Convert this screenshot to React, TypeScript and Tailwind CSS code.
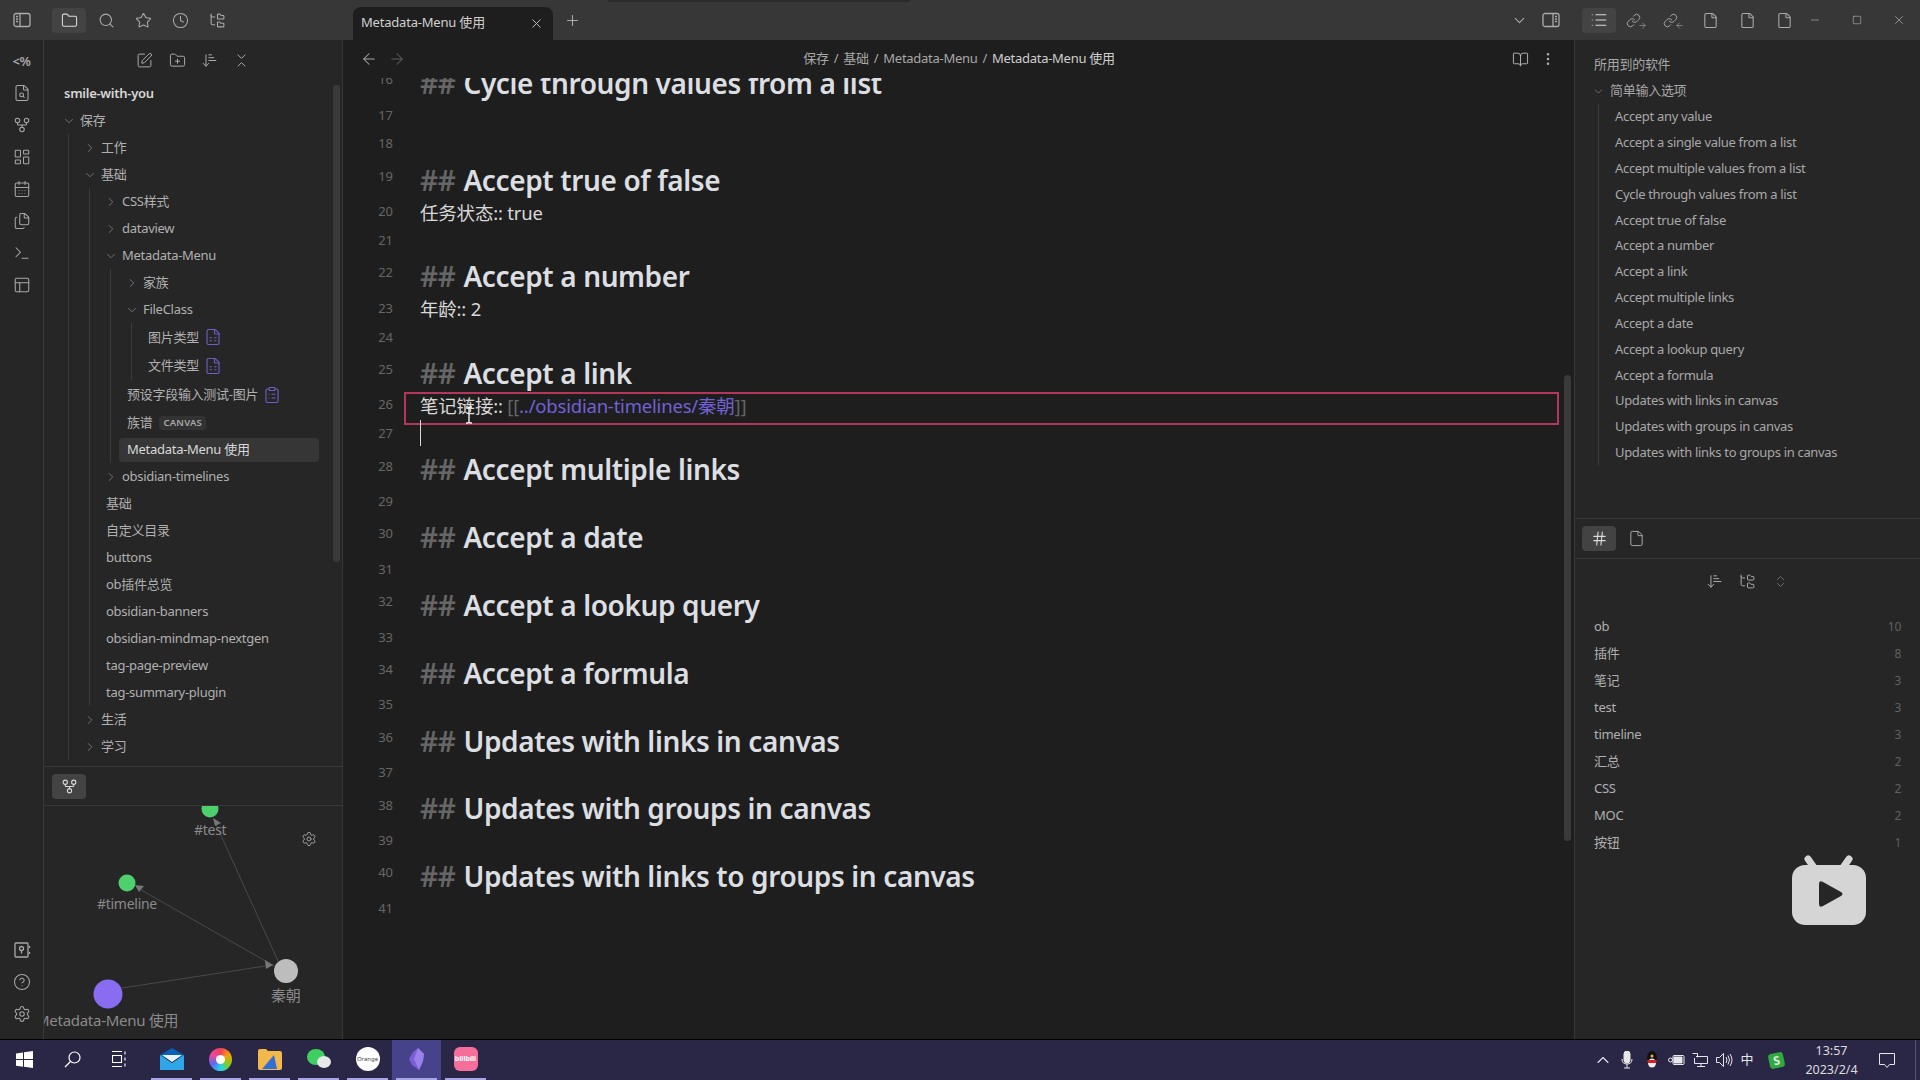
import { ReactNode } from "react";
import {
  ArrowDownNarrowWide, ArrowLeft, ArrowRight, BookOpen, CalendarDays, ChevronDown, ChevronRight, ChevronUp,
  ChevronsDownUp, ChevronsUpDown, CircleHelp, ClipboardList, Clock, EllipsisVertical, File, FileSearch,
  FileSpreadsheet, Files, Folder, FolderPlus, FolderTree, GitFork, Hash, LayoutDashboard, Link, List, Minus,
  PanelsTopLeft, Plus, Search, Settings, Square, SquarePen, Star, Terminal, X,
} from "lucide-react";

const UI_FONT = "font-['Noto_Sans','Noto_Sans_CJK_SC',sans-serif]";

function SideIcon({ right = false }: { right?: boolean }) {
  return (
    <svg width="18" height="18" viewBox="0 0 18 18" fill="none" stroke="currentColor" strokeWidth="1.3">
      <rect x="1" y="2.5" width="16" height="13" rx="2" />
      <path d={right ? "M11 2.5v13" : "M7 2.5v13"} />
      <path d={right ? "M13 5.5h2M13 8h2M13 10.5h2" : "M3 5.5h2M3 8h2M3 10.5h2"} />
    </svg>
  );
}

function Btn({ children, active = false, w = "w-[34px]" }: { children: ReactNode; active?: boolean; w?: string }) {
  return (
    <div className={`${w} h-[25px] shrink-0 flex items-center justify-center rounded text-[#ababab] ${active ? "bg-[#434343] text-[#dadada]" : ""}`}>
      {children}
    </div>
  );
}

function TitleBar() {
  return (
    <div className="h-10 shrink-0 bg-[#373737] flex items-end relative">
      <div className="absolute top-0 left-[608px] w-[302px] h-[2px] bg-[#2b2b2b]" />
      <div className="h-10 flex items-center pl-[5px] gap-[3px]">
        <Btn><SideIcon /></Btn>
        <div className="w-[7px]" />
        <Btn active><Folder size={17} strokeWidth={1.5} /></Btn>
        <Btn><Search size={17} strokeWidth={1.5} /></Btn>
        <Btn><Star size={17} strokeWidth={1.5} /></Btn>
        <Btn><Clock size={17} strokeWidth={1.5} /></Btn>
        <Btn><FolderTree size={17} strokeWidth={1.5} /></Btn>
      </div>
      <div className="ml-[119px] w-[200px] h-[33px] bg-[#1e1e1e] rounded-t-lg flex items-center pl-[8px] pr-[9px] text-[#d0d0d0] text-[13px] tracking-[-0.2px]">
        <span className="flex-1 -mt-[2px]">Metadata-Menu 使用</span>
        <X size={15} strokeWidth={1.5} className="text-[#c0c0c0]" />
      </div>
      <div className="h-10 flex items-center ml-[2px]"><Btn><Plus size={17} strokeWidth={1.5} /></Btn></div>
      <div className="flex-1" />
      <div className="h-10 flex items-center">
        <Btn w="w-[32px]"><ChevronDown size={17} strokeWidth={1.5} /></Btn>
        <Btn w="w-[32px]"><SideIcon right /></Btn>
        <div className="w-[15px]" />
        <div className="flex gap-[3px]">
          <Btn active><List size={18} strokeWidth={1.5} /></Btn>
          <Btn><span className="flex items-end"><Link size={15} strokeWidth={1.5} /><ArrowRight size={9} strokeWidth={1.6} className="-ml-[3px] -mb-[2px]" /></span></Btn>
          <Btn><span className="flex items-end"><Link size={15} strokeWidth={1.5} /><ArrowLeft size={9} strokeWidth={1.6} className="-ml-[3px] -mb-[2px]" /></span></Btn>
          <Btn><File size={17} strokeWidth={1.5} /></Btn>
          <Btn><File size={17} strokeWidth={1.5} /></Btn>
          <Btn><File size={17} strokeWidth={1.5} /></Btn>
        </div>
        <div className="w-[28px] mr-[7px] flex justify-center text-[#bdbdbd]"><Minus size={12} strokeWidth={1.2} /></div>
        <div className="w-[42px] flex justify-center text-[#bdbdbd]"><Square size={10} strokeWidth={1.4} /></div>
        <div className="w-[42px] flex justify-center text-[#bdbdbd]"><X size={14} strokeWidth={1.1} /></div>
      </div>
    </div>
  );
}

function Ribbon() {
  const top = [FileSearch, GitFork, LayoutDashboard, CalendarDays, Files, Terminal, PanelsTopLeft];
  return (
    <div className="w-[44px] shrink-0 bg-[#262626] border-r border-[#383838] flex flex-col items-center text-[#a8a8a8] pt-[7px]">
      <div className="h-[30px] flex items-center text-[13px] font-semibold tracking-tight">&lt;%</div>
      {top.map((Icon, i) => (
        <div key={i} className="h-[32px] w-full flex items-center justify-center">
          <Icon size={18} strokeWidth={1.4} />
        </div>
      ))}
      <div className="flex-1" />
      <div className="h-[32px] flex items-center">
        <svg width="18" height="18" viewBox="0 0 18 18" fill="none" stroke="currentColor" strokeWidth="1.3">
          <rect x="2" y="2" width="13" height="14" rx="1" />
          <circle cx="8.5" cy="7.5" r="2" />
          <path d="M8.5 9.5v3M16.5 5v2M16.5 11v2" />
        </svg>
      </div>
      <div className="h-[32px] flex items-center"><CircleHelp size={18} strokeWidth={1.4} /></div>
      <div className="h-[32px] flex items-center mb-[9px]"><Settings size={18} strokeWidth={1.4} /></div>
    </div>
  );
}

function Leaf({ text, h = "h-[27px]", children, active = false }: { text: string; h?: string; children?: ReactNode; active?: boolean }) {
  return (
    <div className={`${h} flex items-center pl-[9px] text-[13px] text-[#b0b0b0]`}>
      <div className={`flex items-center gap-[5px] pl-[8px] ${active ? "w-[200px] h-[24px] bg-[#363636] rounded text-[#d8d8d8]" : ""}`}>
        <span className="whitespace-nowrap">{text}</span>
        {children}
      </div>
    </div>
  );
}

function Folder2({ text, open = false, children }: { text: string; open?: boolean; children?: ReactNode }) {
  return (
    <div>
      <div className="h-[27px] flex items-center text-[13px] text-[#b0b0b0]">
        <span className="w-[33px] pl-[15px] text-[#777] flex">
          {open ? <ChevronDown size={14} strokeWidth={1.6} /> : <ChevronRight size={14} strokeWidth={1.6} />}
        </span>
        <span className="whitespace-nowrap">{text}</span>
      </div>
      {children && <div className="ml-[21px] -mr-px border-l border-[#3c3c3c] [&>*]:-ml-px">{children}</div>}
    </div>
  );
}

function LeftSidebar() {
  return (
    <div className="w-[299px] shrink-0 bg-[#262626] border-r border-[#383838] flex flex-col tracking-[-0.28px]">
      <div className="h-[727px] border-b border-[#383838] relative overflow-hidden shrink-0 flex flex-col">
        <div className="h-[40px] flex items-center pl-[84px] text-[#a8a8a8] shrink-0">
          <Btn w="w-[33px]"><SquarePen size={17} strokeWidth={1.4} /></Btn>
          <Btn w="w-[32px]"><FolderPlus size={17} strokeWidth={1.4} /></Btn>
          <Btn w="w-[32px]"><ArrowDownNarrowWide size={17} strokeWidth={1.4} /></Btn>
          <Btn w="w-[33px]"><ChevronsDownUp size={17} strokeWidth={1.4} /></Btn>
        </div>
        <div className="absolute right-[2px] top-[45px] w-[7px] h-[477px] bg-[#3a3a3a] rounded" />
        <div className="h-[27px] pl-[20px] flex items-center text-[13px] font-semibold text-[#d6d6d6] shrink-0">smile-with-you</div>
        <div className="ml-[3px]">
          <Folder2 text="保存" open>
            <Folder2 text="工作" />
            <Folder2 text="基础" open>
              <Folder2 text="CSS样式" />
              <Folder2 text="dataview" />
              <Folder2 text="Metadata-Menu" open>
                <Folder2 text="家族" />
                <Folder2 text="FileClass" open>
                  <Leaf text="图片类型" h="h-[28.5px]"><FileSpreadsheet size={18} strokeWidth={1.5} className="text-[#6f5fc4]" /></Leaf>
                  <Leaf text="文件类型" h="h-[28.5px]"><FileSpreadsheet size={18} strokeWidth={1.5} className="text-[#6f5fc4]" /></Leaf>
                </Folder2>
                <Leaf text="预设字段输入测试-图片" h="h-[29px]"><ClipboardList size={18} strokeWidth={1.5} className="text-[#6f5fc4]" /></Leaf>
                <Leaf text="族谱" h="h-[28px]">
                  <span className="ml-[2px] h-[14px] px-[4px] bg-[#333] rounded text-[9.5px] font-semibold tracking-wide text-[#a8a8a8] flex items-center">CANVAS</span>
                </Leaf>
                <Leaf text="Metadata-Menu 使用" h="h-[26px]" active />
              </Folder2>
              <Folder2 text="obsidian-timelines" />
              <Leaf text="基础" />
              <Leaf text="自定义目录" />
              <Leaf text="buttons" />
              <Leaf text="ob插件总览" />
              <Leaf text="obsidian-banners" />
              <Leaf text="obsidian-mindmap-nextgen" />
              <Leaf text="tag-page-preview" />
              <Leaf text="tag-summary-plugin" />
            </Folder2>
            <Folder2 text="生活" />
            <Folder2 text="学习" />
          </Folder2>
        </div>
      </div>
      <div className="h-[39px] shrink-0 border-b border-[#383838] flex items-center pl-[8px]">
        <Btn active><GitFork size={17} strokeWidth={1.5} /></Btn>
      </div>
      <GraphView />
    </div>
  );
}

// nodes of the local graph, coordinates relative to the panel
function GraphView() {
  return (
    <div className="flex-1 relative overflow-hidden text-[#8a8a8a] text-[14px]">
      <svg className="absolute inset-0" width="298" height="233" fill="none">
        <path d="M234 155 L170 14 M232 161 L92 81 M78 182 L228 159" stroke="#4a4a4a" strokeWidth="1" />
        <path d="M169 12l8 5-6 3zM91 79l9 1-5 6zM229 159l-8-5 1 9z" fill="#777" />
        <circle cx="166" cy="3" r="8.5" fill="#4ed06f" />
        <circle cx="83" cy="77" r="8.5" fill="#4ed06f" />
        <circle cx="242" cy="165" r="12" fill="#bdbdbd" />
        <circle cx="64" cy="188" r="14.5" fill="#8a6cf0" />
      </svg>
      <span className="absolute left-[150px] top-[13px]">#test</span>
      <span className="absolute left-[53px] top-[87px]">#timeline</span>
      <span className="absolute left-[227px] top-[178px] text-[15px]">秦朝</span>
      <span className="absolute -left-[8px] top-[203px] whitespace-nowrap text-[15px]">Metadata-Menu 使用</span>
      <Settings size={16} strokeWidth={1.4} className="absolute left-[257px] top-[25px] text-[#a8a8a8]" />
    </div>
  );
}

type Line = { n: number; h?: string; t?: string };

const LINES: Line[] = [
  { n: 16, h: "Cycle through values from a list" },
  { n: 17 },
  { n: 18 },
  { n: 19, h: "Accept true of false" },
  { n: 20, t: "任务状态:: true" },
  { n: 21 },
  { n: 22, h: "Accept a number" },
  { n: 23, t: "年龄:: 2" },
  { n: 24 },
  { n: 25, h: "Accept a link" },
  { n: 26, t: "link" },
  { n: 27 },
  { n: 28, h: "Accept multiple links" },
  { n: 29 },
  { n: 30, h: "Accept a date" },
  { n: 31 },
  { n: 32, h: "Accept a lookup query" },
  { n: 33 },
  { n: 34, h: "Accept a formula" },
  { n: 35 },
  { n: 36, h: "Updates with links in canvas" },
  { n: 37 },
  { n: 38, h: "Updates with groups in canvas" },
  { n: 39 },
  { n: 40, h: "Updates with links to groups in canvas" },
  { n: 41 },
];

function EditorLine({ line }: { line: Line }) {
  const num = (
    <div className="w-[77px] pr-[27px] shrink-0 text-right text-[13px] text-[#666]">{line.n}</div>
  );
  if (line.h) {
    return (
      <div className="h-[39px] flex">
        <div className="h-[36px] flex items-center">{num}</div>
        <div className="flex items-center h-[42px] whitespace-nowrap text-[28px] font-semibold tracking-[-0.38px] text-[#dcdee2]">
          <span className="text-[#666] mr-[8px]">##</span>
          <span>{line.h}</span>
        </div>
      </div>
    );
  }
  return (
    <div className="h-[28.8px] flex items-center">
      {num}
      {line.t === "link" ? (
        <div className="text-[18.5px] tracking-[-0.2px] whitespace-nowrap pt-[1px]">
          <span className="text-[#d8d8d8]">笔记链接:: </span>
          <span className="text-[#666]">[[</span>
          <span className="text-[#7161d6]">../obsidian-timelines/秦朝</span>
          <span className="text-[#666]">]]</span>
        </div>
      ) : (
        <div className="text-[18.5px] tracking-[-0.2px] text-[#d8d8d8] whitespace-nowrap pt-[1px]">{line.t}</div>
      )}
    </div>
  );
}

function Editor() {
  return (
    <div className="flex-1 min-w-0 bg-[#1e1e1e] flex flex-col relative">
      <div className="h-[38px] shrink-0 flex items-center relative text-[#a8a8a8] z-10 bg-[#1e1e1e]">
        <div className="pl-[17px] flex gap-[10px]">
          <ArrowLeft size={18} strokeWidth={1.4} />
          <ArrowRight size={18} strokeWidth={1.4} className="text-[#5f5f5f]" />
        </div>
        <div className="flex-1 flex justify-center gap-[5px] text-[13px] tracking-[-0.28px] -mt-[1px]">
          <span>保存</span><span>/</span><span>基础</span><span>/</span><span>Metadata-Menu</span><span>/</span>
          <span className="text-[#cfcfcf]">Metadata-Menu 使用</span>
        </div>
        <div className="pr-[18px] flex items-center gap-[11px] text-[#b0b0b0]">
          <BookOpen size={17} strokeWidth={1.4} />
          <EllipsisVertical size={16} strokeWidth={1.8} />
        </div>
      </div>
      <div className="flex-1 overflow-hidden">
        <div className="-mt-[16px]">
          {LINES.map((l) => <EditorLine key={l.n} line={l} />)}
        </div>
      </div>
      <div className="absolute left-[61px] top-[352px] w-[1155px] h-[33px] border-2 border-[#b4365a]" />
      <div className="absolute left-[77px] top-[380px] w-px h-[26px] bg-[#d8d8d8]" />
      <svg className="absolute left-[121px] top-[366px]" width="10" height="18" viewBox="0 0 10 18" fill="none" stroke="#f0f0f0" strokeWidth="1.4">
        <path d="M2 1h2l1 1 1-1h2M5 2v14M2 17h2l1-1 1 1h2" />
      </svg>
      <div className="absolute right-[3px] top-[335px] w-[7px] h-[466px] bg-[#3a3a3a] rounded" />
    </div>
  );
}

const OUTLINE = [
  "Accept any value", "Accept a single value from a list", "Accept multiple values from a list",
  "Cycle through values from a list", "Accept true of false", "Accept a number", "Accept a link",
  "Accept multiple links", "Accept a date", "Accept a lookup query", "Accept a formula",
  "Updates with links in canvas", "Updates with groups in canvas", "Updates with links to groups in canvas",
];

const TAGS: [string, number][] = [
  ["ob", 10], ["插件", 8], ["笔记", 3], ["test", 3], ["timeline", 3], ["汇总", 2], ["CSS", 2], ["MOC", 2], ["按钮", 1],
];

function RightSidebar() {
  return (
    <div className="w-[346px] shrink-0 bg-[#262626] border-l border-[#383838] flex flex-col relative tracking-[-0.28px]">
      <div className="h-[479px] shrink-0 border-b border-[#383838] pt-[12px] text-[13px] text-[#a8a8a8]">
        <div className="h-[26px] pl-[19px] flex items-center">所用到的软件</div>
        <div className="h-[26px] pl-[17px] flex items-center gap-[5px]">
          <ChevronDown size={13} strokeWidth={1.6} className="text-[#777]" />
          <span>简单输入选项</span>
        </div>
        <div className="ml-[23px] border-l border-[#3c3c3c] tracking-[-0.32px]">
          {OUTLINE.map((o) => (
            <div key={o} className="h-[25.85px] pl-[16px] flex items-center whitespace-nowrap">{o}</div>
          ))}
        </div>
      </div>
      <div className="h-[40px] shrink-0 border-b border-[#383838] flex items-center pl-[7px] gap-[3px]">
        <Btn active><Hash size={17} strokeWidth={1.6} /></Btn>
        <Btn><File size={17} strokeWidth={1.4} /></Btn>
      </div>
      <div className="h-[42px] flex items-center justify-center gap-[5px] pt-[2px] text-[#a8a8a8]">
        <Btn w="w-[28px]"><ArrowDownNarrowWide size={17} strokeWidth={1.4} /></Btn>
        <Btn w="w-[28px]"><FolderTree size={17} strokeWidth={1.4} /></Btn>
        <Btn w="w-[28px]"><ChevronsUpDown size={15} strokeWidth={1.4} className="text-[#777]" /></Btn>
      </div>
      <div className="pt-[12px] pl-[19px] pr-[19px] text-[13px]">
        {TAGS.map(([t, c]) => (
          <div key={t} className="h-[27px] flex items-center justify-between">
            <span className="text-[#b0b0b0]">{t}</span>
            <span className="text-[#616161] text-[12px]">{c}</span>
          </div>
        ))}
      </div>
      <svg className="absolute left-[216px] top-[814px]" width="76" height="72" viewBox="0 0 76 72">
        <path d="M24 15 L17 5 M51 15 L58 5" stroke="#d5d5d5" strokeWidth="7" strokeLinecap="round" />
        <rect x="1" y="11" width="74" height="60" rx="13" fill="#d5d5d5" />
        <path d="M28 30q0-4 4-2l18 10q3 2 0 4l-18 10q-4 2-4-2z" fill="#262626" />
      </svg>
    </div>
  );
}

function TaskIcon({ children, run = false, active = false, w = "w-[49px]" }: { children: ReactNode; run?: boolean; active?: boolean; w?: string }) {
  return (
    <div className={`${w} h-full flex flex-col shrink-0 ${active ? "bg-[#47438a]" : ""}`}>
      <div className="flex-1 flex items-center justify-center">{children}</div>
      <div className={`h-[2px] mx-[4px] ${run ? "bg-[#a9a4e6]" : ""}`} />
    </div>
  );
}

function Taskbar() {
  return (
    <div className="h-[41px] shrink-0 bg-[#2a2746] border-t border-black flex items-stretch text-white">
      <TaskIcon w="w-[48px]">
        <svg width="17" height="17" viewBox="0 0 17 17" fill="#fff"><path d="M0 2.4l7-1v6.7H0zM8 1.3L17 0v8.100H8zM0 9h7v6.700l-7-1zM8 9h9v8l-9-1.300z" /></svg>
      </TaskIcon>
      <TaskIcon w="w-[48px]">
        <svg width="17" height="17" viewBox="0 0 17 17" fill="none" stroke="#fff" strokeWidth="1.2"><circle cx="10.500" cy="6.500" r="5.500" /><path d="M6.500 10.500L1 16" /></svg>
      </TaskIcon>
      <TaskIcon w="w-[48px]">
        <svg width="16" height="16" viewBox="0 0 16 16" fill="none" stroke="#fff" strokeWidth="1.1"><path d="M0 .5h10M0 15.500h10M.5 4.500h9v7h-9zM13 .5v3M13 6.500v3M13 12.500v3" /></svg>
      </TaskIcon>
      <div className="w-[3px]" />
      <TaskIcon run>
        <svg width="24" height="22" viewBox="0 0 24 22"><path d="M0 7L12 0l12 7v3H0z" fill="#0a62b8" /><path d="M0 7l12 8 12-8v15H0z" fill="#2ea6e8" /><path d="M2 7h20l-10 7z" fill="#e8f4fb" /></svg>
      </TaskIcon>
      <TaskIcon run>
        <div className="w-[23px] h-[23px] rounded-full bg-[conic-gradient(#f43f5e,#f59e0b,#84cc16,#22d3ee,#6366f1,#ec4899,#f43f5e)] flex items-center justify-center">
          <div className="w-[9px] h-[9px] rounded-full bg-white" />
        </div>
      </TaskIcon>
      <TaskIcon run>
        <svg width="24" height="21" viewBox="0 0 24 21"><path d="M0 2q0-2 2-2h6l2 2h12q2 0 2 2v15q0 2-2 2H2q-2 0-2-2z" fill="#f2b84b" /><path d="M4 20L16 6l3 14z" fill="#2f6fd8" /></svg>
      </TaskIcon>
      <TaskIcon run>
        <svg width="24" height="20" viewBox="0 0 24 20"><ellipse cx="9" cy="8" rx="9" ry="8" fill="#3ed05f" /><ellipse cx="17" cy="13" rx="7" ry="6" fill="#e8e8e8" /></svg>
      </TaskIcon>
      <TaskIcon run>
        <div className="w-[24px] h-[24px] rounded-full bg-white text-[6px] text-[#444] flex items-center justify-center overflow-hidden">Orange</div>
      </TaskIcon>
      <TaskIcon run active>
        <svg width="16" height="22" viewBox="0 0 16 22"><path d="M9 0L15 6 14 13 10 22 3 17 0 11 4 4z" fill="#7b5fd6" /><path d="M9 0L5 11l5 11 4-9 1-7z" fill="#9a82ea" /></svg>
      </TaskIcon>
      <TaskIcon run>
        <div className="w-[24px] h-[24px] rounded-md bg-[#f56f9a] text-[7px] font-bold text-white flex items-center justify-center">bilibili</div>
      </TaskIcon>
      <div className="flex-1" />
      <div className="flex items-center text-[#e6e6e6]">
        <div className="w-[24px] flex justify-center"><ChevronUp size={20} strokeWidth={1.3} /></div>
        <div className="w-[24px] flex justify-center">
          <svg width="12" height="18" viewBox="0 0 12 18" fill="none" stroke="#e6e6e6"><rect x="3" y="0" width="6" height="12" rx="3" fill="#e6e6e6" /><path d="M1 8q0 5 5 5t5-5M6 13v4M3 17h6" /></svg>
        </div>
        <div className="w-[25px] flex justify-center">
          <svg width="16" height="18" viewBox="0 0 16 18"><ellipse cx="8" cy="7" rx="5" ry="7" fill="#111" /><ellipse cx="8" cy="12" rx="4" ry="4.500" fill="#eee" /><path d="M3 9h10l-1 3H4z" fill="#d5202a" /><circle cx="8" cy="5" r="1.500" fill="#f2b233" /></svg>
        </div>
        <div className="w-[24px] flex justify-center">
          <svg width="17" height="12" viewBox="0 0 17 12" fill="none" stroke="#e6e6e6"><rect x="5" y="1.500" width="11" height="9" rx="1" /><path d="M6 3h8v6H6z" fill="#e6e6e6" /><circle cx="2.500" cy="6" r="2" /></svg>
        </div>
        <div className="w-[24px] flex justify-center">
          <svg width="16" height="14" viewBox="0 0 16 14" fill="none" stroke="#e6e6e6"><path d="M.5.5h5v4M4 3.500h11.500v7h-13V5M9 10.500v3M5 13.500h8" /></svg>
        </div>
        <div className="w-[24px] flex justify-center">
          <svg width="17" height="14" viewBox="0 0 17 14" fill="none" stroke="#e6e6e6"><path d="M.5 4.500h3l4-4v13l-4-4h-3zM10 4q2 3 0 6M12 2.500q3 4.500 0 9M14 1q4 6 0 12" /></svg>
        </div>
        <div className="w-[22px] flex justify-center text-[13px]">中</div>
        <div className="w-[36px] flex justify-center">
          <div className="w-[15px] h-[15px] rounded-[3px] bg-[#2faa3c] -rotate-12 text-[12px] leading-[15px] font-bold text-center">S</div>
        </div>
        <div className="w-[75px] flex flex-col items-center text-[12.5px] leading-[19px] text-[#dcdcdc]">
          <span>13:57</span>
          <span>2023/2/4</span>
        </div>
        <div className="w-[36px] flex justify-center">
          <svg width="16" height="15" viewBox="0 0 16 15" fill="none" stroke="#e6e6e6"><path d="M.5.5h15v11h-5l-2.500 3-2.500-3h-5z" /></svg>
        </div>
        <div className="w-[10px]" />
        <div className="w-[5px] h-full border-l border-[#56537a]" />
      </div>
    </div>
  );
}

export default function App() {
  return (
    <div className={`w-[1920px] h-[1080px] flex flex-col overflow-hidden bg-[#1e1e1e] ${UI_FONT}`}>
      <TitleBar />
      <div className="flex-1 min-h-0 flex">
        <Ribbon />
        <LeftSidebar />
        <Editor />
        <RightSidebar />
      </div>
      <Taskbar />
    </div>
  );
}
